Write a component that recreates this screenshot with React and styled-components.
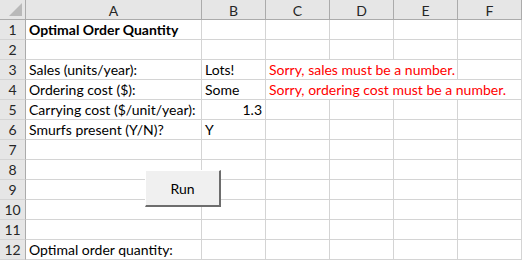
import React from 'react'
import styled, { createGlobalStyle } from 'styled-components'

const GlobalStyle = createGlobalStyle`
  html, body {
    margin: 0;
    padding: 0;
    background: #ffffff;
  }
  body {
    font-family: Lato, "Liberation Sans", sans-serif;
  }
`

const columns = ['A', 'B', 'C', 'D', 'E', 'F']

// each row: list of cells { col, span, text, bold, red, right }
const rows = [
  [{ col: 0, text: 'Optimal Order Quantity', bold: true }],
  [],
  [
    { col: 0, text: 'Sales (units/year):' },
    { col: 1, text: 'Lots!' },
    { col: 2, span: 3, text: 'Sorry, sales must be a number.', red: true }
  ],
  [
    { col: 0, text: 'Ordering cost ($):' },
    { col: 1, text: 'Some' },
    { col: 2, span: 4, text: 'Sorry, ordering cost must be a number.', red: true }
  ],
  [
    { col: 0, text: 'Carrying cost ($/unit/year):' },
    { col: 1, text: '1.3', right: true }
  ],
  [
    { col: 0, text: 'Smurfs present (Y/N)?' },
    { col: 1, text: 'Y' }
  ],
  [], [], [], [], [],
  [{ col: 0, text: 'Optimal order quantity:' }]
]

const Wrap = styled.div`
  position: relative;
  width: 522px;
  height: 260px;
  overflow: hidden;
`

const Sheet = styled.div`
  display: grid;
  grid-template-columns: 26px 176px repeat(5, 64px);
  grid-auto-rows: 20px;
`

const Corner = styled.div`
  background: #e6e6e6;
  border-right: 1px solid #ababab;
  border-bottom: 1px solid #ababab;
  box-sizing: border-box;
  position: relative;

  &::after {
    content: '';
    position: absolute;
    right: 3px;
    bottom: 3px;
    width: 0;
    height: 0;
    border-left: 13px solid transparent;
    border-bottom: 13px solid #b9b9b9;
  }
`

const ColHead = styled.div`
  background: #e6e6e6;
  border-right: 1px solid #ababab;
  border-bottom: 1px solid #ababab;
  box-sizing: border-box;
  display: flex;
  align-items: center;
  justify-content: center;
  font-size: 14px;
  color: #262626;
  padding-top: 1px;
`

const RowHead = styled.div`
  background: #e6e6e6;
  border-right: 1px solid #ababab;
  border-bottom: 1px solid #d4d4d4;
  box-sizing: border-box;
  display: flex;
  align-items: flex-end;
  justify-content: center;
  font-size: 14px;
  color: #262626;
  padding-bottom: 1px;
`

const Cell = styled.div`
  grid-column: span ${p => p.$span || 1};
  border-right: 1px solid #d4d4d4;
  border-bottom: 1px solid #d4d4d4;
  box-sizing: border-box;
  display: flex;
  align-items: flex-end;
  justify-content: ${p => (p.$right ? 'flex-end' : 'flex-start')};
  padding: 0 3px 1px 3px;
  font-size: 14px;
  font-weight: ${p => (p.$bold ? 700 : 400)};
  color: ${p => (p.$red ? '#ff0000' : '#000000')};
  white-space: nowrap;
  overflow: visible;
  line-height: 17px;
`

const RunButton = styled.button`
  position: absolute;
  left: 145px;
  top: 170px;
  width: 76px;
  height: 37px;
  box-sizing: border-box;
  background: #f0f0f0;
  border: none;
  border-top: 1px solid #ffffff;
  border-left: 1px solid #ffffff;
  border-right: 2px solid #6d6d6d;
  border-bottom: 2px solid #6d6d6d;
  font-family: Lato, "Liberation Sans", sans-serif;
  font-size: 14px;
  color: #000000;
  padding: 0;
`

function renderRow(cells) {
  const out = []
  let col = 0
  while (col < columns.length) {
    const cell = cells.find(c => c.col === col)
    if (cell) {
      out.push(
        <Cell key={col} $span={cell.span} $bold={cell.bold} $red={cell.red} $right={cell.right}>
          {cell.text}
        </Cell>
      )
      col += cell.span || 1
    } else {
      out.push(<Cell key={col} />)
      col += 1
    }
  }
  return out
}

export default function App() {
  return (
    <Wrap>
      <GlobalStyle />
      <Sheet>
        <Corner />
        {columns.map(c => <ColHead key={c}>{c}</ColHead>)}
        {rows.map((cells, i) => (
          <React.Fragment key={i}>
            <RowHead>{i + 1}</RowHead>
            {renderRow(cells)}
          </React.Fragment>
        ))}
      </Sheet>
      <RunButton>Run</RunButton>
    </Wrap>
  )
}
